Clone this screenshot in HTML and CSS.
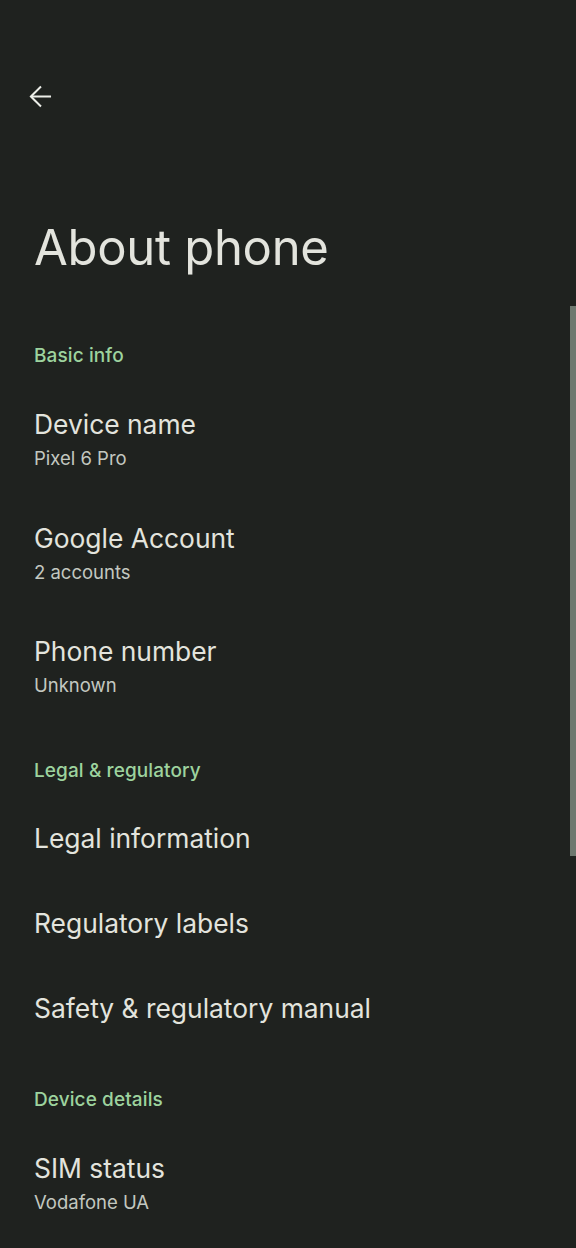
FILE: index.html
```html
<!DOCTYPE html>
<html lang="en">
<head>
<meta charset="utf-8">
<title>About phone</title>
<link rel="stylesheet" href="styles.css">
</head>
<body>
<div class="screen">
  <div class="appbar">
    <button class="back" aria-label="Back">
      <svg width="24" height="24" viewBox="0 0 24 24" fill="none" stroke="currentColor" stroke-width="2.1" stroke-linecap="butt" stroke-linejoin="miter">
        <path d="M23 12H2"/>
        <path d="M12.5 1.5L2 12l10.5 10.5"/>
      </svg>
    </button>
  </div>
  <h1 class="title">About phone</h1>
  <div class="list">
    <div class="category">Basic info</div>
    <div class="item two">
      <div class="item-title">Device name</div>
      <div class="item-sub">Pixel 6 Pro</div>
    </div>
    <div class="item two">
      <div class="item-title">Google Account</div>
      <div class="item-sub">2 accounts</div>
    </div>
    <div class="item two">
      <div class="item-title">Phone number</div>
      <div class="item-sub">Unknown</div>
    </div>
    <div class="category">Legal &amp; regulatory</div>
    <div class="item one">
      <div class="item-title">Legal information</div>
    </div>
    <div class="item one">
      <div class="item-title">Regulatory labels</div>
    </div>
    <div class="item one">
      <div class="item-title">Safety &amp; regulatory manual</div>
    </div>
    <div class="category">Device details</div>
    <div class="item two">
      <div class="item-title">SIM status</div>
      <div class="item-sub">Vodafone UA</div>
    </div>
  </div>
  <div class="scrollbar"></div>
</div>
</body>
</html>
```

FILE: styles.css
```css
html, body {
  margin: 0;
  padding: 0;
  background: #1f221f;
}
body {
  font-family: Inter, "Open Sans", Roboto, sans-serif;
  color: #e3e4dd;
}
.screen {
  position: relative;
  width: 576px;
  height: 1248px;
  overflow: hidden;
}
.appbar {
  height: 120px;
  padding-top: 72px;
  box-sizing: border-box;
  padding-left: 16px;
}
.back {
  width: 48px;
  height: 48px;
  padding: 0;
  border: 0;
  background: none;
  color: #eceee8;
  display: flex;
  align-items: center;
  justify-content: center;
}
.back svg {
  width: 23px;
  height: 23px;
}
.title {
  margin: 0;
  padding: 96px 0 30px 34px;
  font-size: 49px;
  line-height: 64px;
  font-weight: 400;
  letter-spacing: -0.3px;
  color: #e3e4dd;
}
.list {
  display: flex;
  flex-direction: column;
}
.category {
  padding: 34px 0 16px 34px;
  font-size: 19px;
  line-height: 24px;
  color: #9dd39e;
  font-weight: 500;
  letter-spacing: 0.1px;
}
.item {
  padding-left: 34px;
  box-sizing: border-box;
}
.item.two {
  padding-top: 23px;
  height: 113.5px;
}
.item.one {
  padding-top: 22.5px;
  height: 85px;
}
.item-title {
  font-size: 26.4px;
  line-height: 34px;
  color: #e3e4dd;
}
.item-sub {
  font-size: 18.5px;
  line-height: 34px;
  color: #c3c8c0;
}
.scrollbar {
  position: absolute;
  right: 0;
  top: 306px;
  width: 6px;
  height: 550px;
  background: #6e786f;
}
```
